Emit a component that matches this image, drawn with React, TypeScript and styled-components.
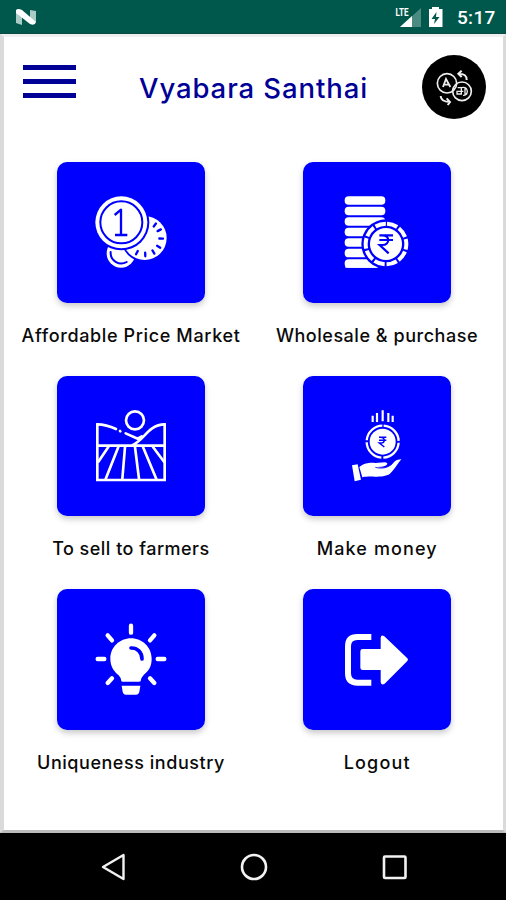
import React from "react";
import styled, { createGlobalStyle } from "styled-components";

const GlobalStyle = createGlobalStyle`
  * { box-sizing: border-box; }
  body { margin: 0; background: #000; font-family: Inter, "Open Sans", sans-serif; }
`;

const Phone = styled.div`
  width: 506px;
  height: 900px;
  display: flex;
  flex-direction: column;
  overflow: hidden;
`;

const StatusBar = styled.header`
  height: 34px;
  flex: none;
  display: flex;
  align-items: center;
  justify-content: space-between;
  padding: 1px 11px 0 15px;
  background: #00574b;
  border-bottom: 1px solid #0a4a41;
`;

const StatusGroup = styled.div`
  display: flex;
  align-items: center;
  height: 100%;
`;

const Clock = styled.span`
  width: 38px;
  margin: 1px 0 0 10px;
  font: 500 19px/22px Roboto, sans-serif;
  letter-spacing: 0.3px;
  color: #fff;
  white-space: nowrap;
`;

const Screen = styled.main`
  height: 799px;
  flex: none;
  border: solid #dadada;
  border-width: 3px 3px 3px 4px;
  border-top-color: #eeeff0;
  border-bottom-color: #bcbcbc;
  background: #fff;
`;

const TopBar = styled.div`
  height: 125px;
  display: flex;
  align-items: flex-start;
  padding: 18px 17px 0 19px;
`;

const MenuButton = styled.button`
  width: 53px;
  height: 33px;
  margin: 10px 0 0;
  padding: 0;
  border: 0;
  background: none;
  display: flex;
  flex-direction: column;
  justify-content: space-between;
`;

const MenuLine = styled.span`
  width: 53px;
  height: 5px;
  background: #000096;
`;

const Title = styled.h1<{ $spacing: number }>`
  flex: 1;
  margin: 17px 0 0 63px;
  font-weight: 500;
  font-size: 27.5px;
  line-height: 32px;
  letter-spacing: ${(p) => p.$spacing}px;
  color: #000096;
  white-space: nowrap;
`;

const LanguageButton = styled.button`
  width: 64px;
  height: 64px;
  padding: 0;
  border: 0;
  border-radius: 50%;
  background: #000;
`;

const Grid = styled.div`
  display: grid;
  grid-template-columns: 246px 246px;
  grid-auto-rows: 213.7px;
  margin-left: 3.7px;
`;

const Cell = styled.div`
  display: flex;
  flex-direction: column;
  align-items: center;
`;

const Tile = styled.div`
  width: 148px;
  height: 140.7px;
  border-radius: 10px;
  overflow: hidden;
  background: #0000fe;
`;

const TileShadow = styled.div`
  border-radius: 10px;
  box-shadow: 0 3px 6px rgba(0, 0, 0, 0.22);
`;

const Label = styled.span<{ $spacing: number }>`
  margin-top: 21px;
  font-weight: 500;
  font-size: 18px;
  line-height: 24px;
  letter-spacing: ${(p) => p.$spacing}px;
  margin-right: ${(p) => -p.$spacing}px;
  color: #0a0a0a;
  white-space: nowrap;
`;

const NavBar = styled.nav`
  flex: 1;
  display: flex;
  align-items: center;
  justify-content: space-between;
  padding: 0 96px 0 97px;
  background: #000;
`;

const Drawing = styled.svg`
  display: block;
`;

const BLUE = "#0000fe";

/* Segmented ring used around the rupee coins. */
function Ring({ cx, cy, r, w, n, gap, turn = 0 }: { cx: number; cy: number; r: number; w: number; n: number; gap: number; turn?: number }) {
  const seg = (2 * Math.PI * r) / n;
  return (
    <circle cx={cx} cy={cy} r={r} fill="none" stroke="#fff" strokeWidth={w}
      strokeDasharray={`${seg - gap} ${gap}`} strokeDashoffset={-gap / 2}
      transform={`rotate(${turn} ${cx} ${cy})`} />
  );
}

function CoinsIcon() {
  const ticks = [-52, -28, 2, 32, 58, 88, 118];
  return (
    <Drawing width="148" height="140.7" viewBox="20 21 444 422">
      <circle cx="212" cy="295" r="43" fill="#fff" />
      <path d="M181 291A32 32 0 0 0 229 321" fill="none" stroke={BLUE} strokeWidth="6" strokeLinecap="round" />
      <circle cx="284" cy="249" r="72" fill={BLUE} />
      <circle cx="283" cy="249" r="66" fill="#fff" />
      {ticks.map((a) => (
        <path key={a} d="M327 249H338" stroke={BLUE} strokeWidth="7" strokeLinecap="round" transform={`rotate(${a} 283 249)`} />
      ))}
      <circle cx="213" cy="202" r="84" fill={BLUE} />
      <circle cx="213" cy="202" r="78" fill="#fff" />
      <circle cx="213" cy="202" r="63" fill="none" stroke={BLUE} strokeWidth="6" />
      <path d="M193 180L212 164V240M194 240H231" fill="none" stroke={BLUE} strokeWidth="7" strokeLinejoin="round" />
    </Drawing>
  );
}

function CoinStackIcon() {
  return (
    <Drawing width="148" height="140.7" viewBox="24 21 444 422">
      {[0, 1, 2, 3, 4, 5, 6].map((i) => (
        <rect key={i} x="149" y={123.5 + i * 31.5} width={i === 6 ? 105 : 122} height="26" rx="12" fill="#fff" />
      ))}
      <path d="M151 325h96v13h-96z" fill="#fff" />
      <circle cx="273" cy="267" r="74" fill={BLUE} />
      <Ring cx={273} cy={267} r={61} w={12} n={10} gap={6} turn={-90} />
      <circle cx="273" cy="267" r="48" fill="#fff" />
      <path d="M253 241H294M253 255H294M261 241C286 240 286 270 262 270H254L281 295" fill="none" stroke={BLUE} strokeWidth="6.5" />
    </Drawing>
  );
}

function FieldIcon() {
  return (
    <Drawing width="148" height="140.7" viewBox="20 18 444 422">
      <g fill="none" stroke="#fff" strokeWidth="8" strokeLinecap="round">
        <circle cx="254" cy="151" r="27" />
        <path strokeLinecap="butt" d="M141 160V330H343V160" />
        <path d="M141 227H343M141 163C162 163 178 168 197 177M209 183L210 184M226 190L262 206L274 199M343 163C290 165 284 211 243 227" />
        <path d="M174 231L144 275M204 231L166 327M224 231L216 327M254 231L266 327M278 231L318 327M308 231L341 275" />
      </g>
    </Drawing>
  );
}

function HandCoinIcon() {
  return (
    <Drawing width="148" height="140.7" viewBox="24 18 444 422">
      <path d="M233 137V156M246 129V156M263 121V154M280 129V156M293 137V156" stroke="#fff" strokeWidth="6.5" />
      <Ring cx={263} cy={215} r={48} w={7} n={4} gap={6} turn={-90} />
      <circle cx="263" cy="215" r="39" fill="#fff" />
      <path d="M252 202H274M252 211H274M257 202C272 202 271 219 257 219H253L268 231" fill="none" stroke={BLUE} strokeWidth="4.5" />
      <path d="M171 286L188 283L198 329L179 334ZM193 291C213 276 229 278 241 279L270 277C285 279 273 290 259 290L246 291C267 297 284 291 294 278Q306 267 319 268C306 283 299 299 285 311C263 326 224 316 202 322Z" fill="#fff" />
      <path d="M241 292C267 299 286 289 296 277" fill="none" stroke={BLUE} strokeWidth="2.5" />
    </Drawing>
  );
}

function BulbIcon() {
  return (
    <Drawing width="148" height="140.7" viewBox="20 28 444 422">
      <path d="M242 138V159M172 167L185 182M312 167L299 182M142 238H162M322 238H342M172 310L185 296M312 310L299 296" stroke="#fff" strokeWidth="13" strokeLinecap="round" />
      <path d="M242 176C208 176 180 203 180 237C180 263 193 276 205 287Q212 294 213 304Q213 306 218 306H266Q270 306 271 304Q272 294 280 286C293 274 304 263 304 237C304 203 276 176 242 176Z" fill="#fff" />
      <path d="M214 318H270L267 336Q265 345 257 345H227Q219 345 217 336Z" fill="#fff" />
      <path d="M242 205C261 204 275 218 275 238" fill="none" stroke={BLUE} strokeWidth="11" strokeLinecap="round" />
    </Drawing>
  );
}

function LogoutIcon() {
  return (
    <Drawing width="148" height="140.7" viewBox="24 28 444 422">
      <path d="M229 172H187Q159 172 159 200V281Q159 309 187 309H229" fill="none" stroke="#fff" strokeWidth="18" />
      <path d="M203 208H257V174Q258 164 268 170L337 236Q341 240 337 244L269 312Q258 318 257 307V271H203Q196 271 196 264V215Q196 208 203 208Z" fill="#fff" />
    </Drawing>
  );
}

const items = [
  { label: "Affordable Price Market", spacing: 0.63, Icon: CoinsIcon },
  { label: "Wholesale & purchase", spacing: 0.53, Icon: CoinStackIcon },
  { label: "To sell to farmers", spacing: 0.48, Icon: FieldIcon },
  { label: "Make money", spacing: 1.1, Icon: HandCoinIcon },
  { label: "Uniqueness industry", spacing: 0.54, Icon: BulbIcon },
  { label: "Logout", spacing: 1.2, Icon: LogoutIcon },
];

export default function App() {
  return (
    <>
      <GlobalStyle />
      <Phone>
        <StatusBar>
          <Drawing width="22" height="17" viewBox="0 0 22 17">
            <path d="M1 2L7 4V16L1 14ZM15 1L21 2V13L15 14Z" fill="#a9cbc5" />
            <path d="M1 1Q3-1 7 1L21 13Q20 17 15 15L1 4Z" fill="#fff" />
          </Drawing>
          <StatusGroup>
            <Drawing width="27" height="22" viewBox="0 0 27 22">
              <path d="M26 2V21H5Z" fill="#4b8b82" />
              <path d="M17 10V21H5Z" fill="#fff" />
              <text x="0.5" y="10" fill="#fff" fontFamily="Roboto, sans-serif" fontWeight="700" fontSize="11.5" textLength="13" lengthAdjust="spacingAndGlyphs">LTE</text>
            </Drawing>
            <Drawing width="25" height="22" viewBox="0 0 25 22">
              <path d="M10 3V1H17V3H20.5V21H7V3Z" fill="#fff" />
              <path d="M14.5 6L9.5 13H13L12 18L17.5 11H14Z" fill="#00574b" />
            </Drawing>
            <Clock>5:17</Clock>
          </StatusGroup>
        </StatusBar>
        <Screen>
          <TopBar>
            <MenuButton aria-label="Menu">
              <MenuLine />
              <MenuLine />
              <MenuLine />
            </MenuButton>
            <Title $spacing={0.9}>Vyabara Santhai</Title>
            <LanguageButton aria-label="Language">
              <Drawing width="64" height="64" viewBox="36 28 192 192">
                <g fill="none" stroke="#eee" strokeWidth="5">
                  <circle cx="111" cy="113" r="29" />
                  <circle cx="156" cy="137" r="28" />
                  <path d="M99 124L108 100L121 124M102 117H117" strokeWidth="5.5" />
                  <path d="M143 126H154V145H141V137H160M154 126Q170 122 172 137Q171 149 159 149M165 126V147" strokeWidth="4" />
                  <path d="M170 103Q171 84 146 84M155 75L145 84L155 94" strokeWidth="6" />
                  <path d="M92 151Q93 168 119 169M110 158L120 169L113 178" strokeWidth="6" />
                </g>
              </Drawing>
            </LanguageButton>
          </TopBar>
          <Grid>
            {items.map(({ label, spacing, Icon }) => (
              <Cell key={label}>
                <TileShadow>
                  <Tile>
                    <Icon />
                  </Tile>
                </TileShadow>
                <Label $spacing={spacing}>{label}</Label>
              </Cell>
            ))}
          </Grid>
        </Screen>
        <NavBar>
          <Drawing width="32" height="32" viewBox="0 0 32 32">
            <path d="M6 16L26.5 4V28Z" fill="none" stroke="#f2f2f2" strokeWidth="2.4" strokeLinejoin="round" />
          </Drawing>
          <Drawing width="32" height="32" viewBox="0 0 32 32">
            <circle cx="16" cy="16" r="12" fill="none" stroke="#f2f2f2" strokeWidth="2.6" />
          </Drawing>
          <Drawing width="32" height="32" viewBox="0 0 32 32">
            <rect x="6" y="5.5" width="21.5" height="21.5" rx="1" fill="none" stroke="#f2f2f2" strokeWidth="2.6" />
          </Drawing>
        </NavBar>
      </Phone>
    </>
  );
}
